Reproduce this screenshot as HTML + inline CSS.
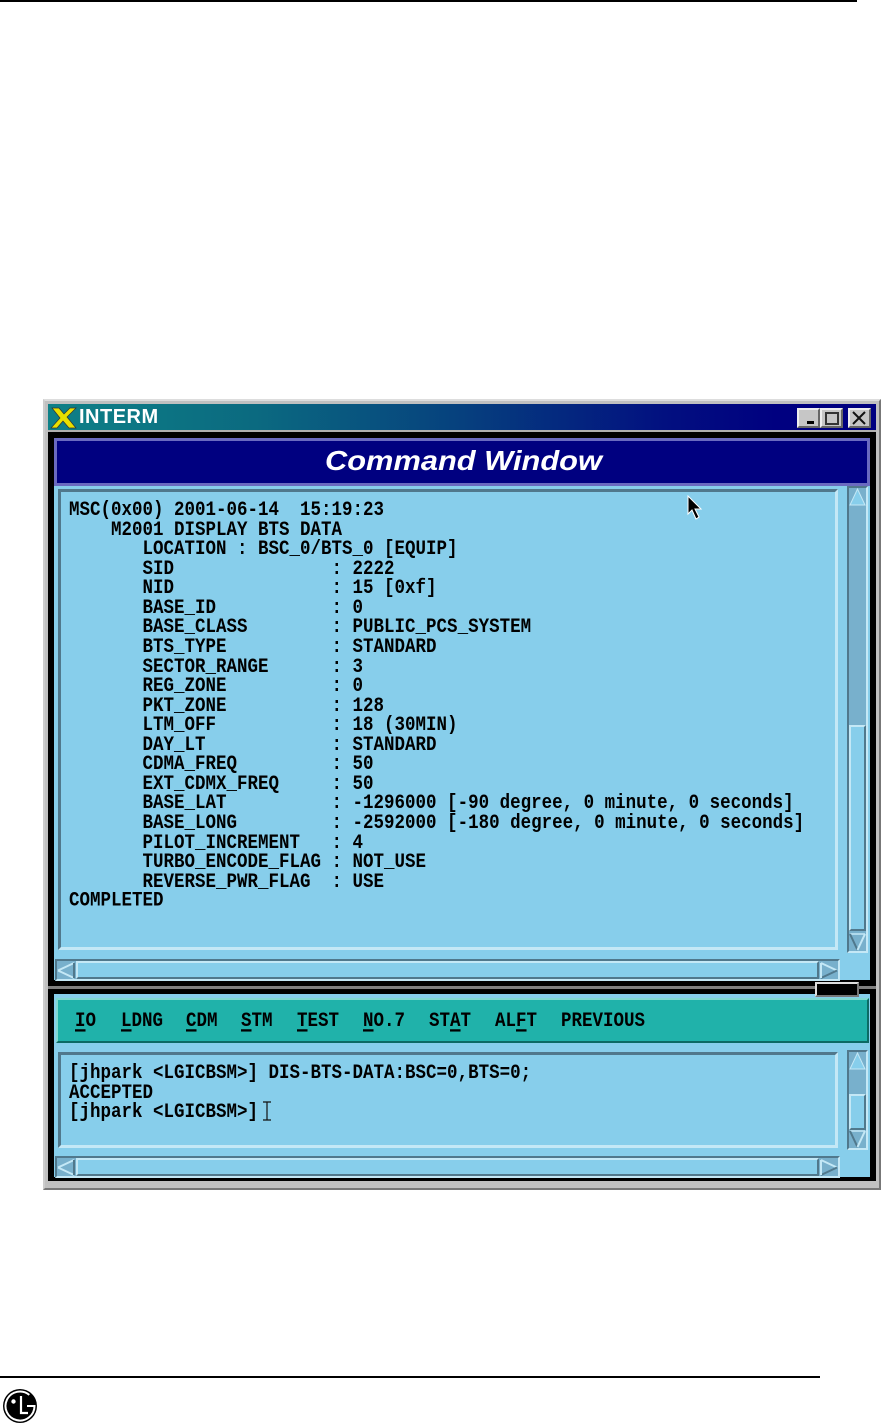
<!DOCTYPE html>
<html><head><meta charset="utf-8"><style>
html,body{margin:0;padding:0;background:#fff}
body{position:relative;width:881px;height:1425px;overflow:hidden}
.a{position:absolute;box-sizing:border-box}
.sunk{border:3px solid;border-color:#50788c #c4e8f6 #c4e8f6 #50788c;background:#87ceeb}
.raise{border:2px solid;border-color:#c4e8f6 #50788c #50788c #c4e8f6;background:#87ceeb}
.trough{background:#78b0cc;border:2px solid;border-color:#50788c #c4e8f6 #c4e8f6 #50788c}
pre{margin:0;position:absolute;font:bold 17.5px "Liberation Mono",monospace;color:#000;transform-origin:0 0;transform:scaleY(1.18);line-height:16.57px;white-space:pre}
.btn{position:absolute;top:408px;height:20px;width:23px;background:#c6c6c6;box-sizing:border-box;border:2px solid;border-color:#eee #666 #666 #eee}
u{text-underline-offset:3px;text-decoration-thickness:2px}
</style></head><body>
<div class="a" style="left:0;top:0;width:857px;height:2px;background:#000"></div>
<div class="a" style="left:0;top:1376px;width:820px;height:2px;background:#000"></div>
<svg class="a" style="left:2px;top:1388px" width="36" height="36" viewBox="0 0 36 36"><circle cx="18" cy="18" r="17" fill="#000"/><path d="M27.3 6.9A14.5 14.5 0 1 0 32.5 18H25" stroke="#fff" stroke-width="2" fill="none"/><circle cx="11.5" cy="13.5" r="2.2" fill="#fff"/><path d="M19 8V25H26" stroke="#fff" stroke-width="2.2" fill="none"/></svg>

<div class="a" style="left:43px;top:399px;width:838px;height:791px;background:#c0c0c0;border:2px solid;border-color:#ddd #777 #777 #ccc"></div>
<div class="a" style="left:48px;top:404px;width:828px;height:28px;background:linear-gradient(90deg,#0e8087 0%,#0b6a80 25%,#06407e 50%,#020f80 75%,#000080 88%);border-bottom:2px solid #b0b0b0"></div>
<svg class="a" style="left:50px;top:406px" width="28" height="24" viewBox="0 0 28 24"><path d="M2 2H9L14 8L20 2H26L17 11L26 22H19L13 15L7 22H1L10 12Z" fill="#e8e000" stroke="#333" stroke-width=".7"/></svg>
<div class="a" style="left:79px;top:404px;font:bold 20px/27px 'Liberation Sans',sans-serif;color:#fff;white-space:pre;letter-spacing:.5px">INTERM</div>
<div class="btn" style="left:797px"><div class="a" style="left:8px;top:11px;width:7px;height:3px;background:#000"></div></div>
<div class="btn" style="left:820px"><div class="a" style="left:3px;top:2px;width:14px;height:13px;border:2px solid #333"></div></div>
<div class="btn" style="left:848px"><svg class="a" style="left:2px;top:1px" width="15" height="14"><path d="M1 1L13 13M13 1L1 13" stroke="#111" stroke-width="2"/></svg></div>

<div class="a" style="left:48px;top:432px;width:828px;height:551px;background:#87ceeb;border:solid #000;border-width:6px 6px 3px 6px"></div>
<div class="a" style="left:48px;top:983px;width:828px;height:3px;background:#000"></div>
<div class="a" style="left:48px;top:986px;width:828px;height:3px;background:#808080"></div>
<div class="a" style="left:48px;top:989px;width:828px;height:192px;background:#87ceeb;border:solid #000;border-width:5px 6px 4px 6px"></div>
<div class="a" style="left:815px;top:982px;width:44px;height:15px;background:#000;border:2px solid;border-color:#ddd #777 #777 #ddd"></div>

<div class="a" style="left:54px;top:438px;width:816px;height:48px;background:#000080;border:3px solid #6a6ac0;outline:0"></div>
<div class="a" style="left:325px;top:444px;font:italic bold 28px/34px 'Liberation Sans',sans-serif;color:#fff;white-space:pre;transform-origin:0 0;transform:scaleX(1.1)">Command Window</div>

<div class="a sunk" style="left:58px;top:489px;width:780px;height:461px"></div>
<pre style="left:69px;top:501px">MSC(0x00) 2001-06-14  15:19:23
    M2001 DISPLAY BTS DATA
       LOCATION : BSC_0/BTS_0 [EQUIP]
       SID               : 2222
       NID               : 15 [0xf]
       BASE_ID           : 0
       BASE_CLASS        : PUBLIC_PCS_SYSTEM
       BTS_TYPE          : STANDARD
       SECTOR_RANGE      : 3
       REG_ZONE          : 0
       PKT_ZONE          : 128
       LTM_OFF           : 18 (30MIN)
       DAY_LT            : STANDARD
       CDMA_FREQ         : 50
       EXT_CDMX_FREQ     : 50
       BASE_LAT          : -1296000 [-90 degree, 0 minute, 0 seconds]
       BASE_LONG         : -2592000 [-180 degree, 0 minute, 0 seconds]
       PILOT_INCREMENT   : 4
       TURBO_ENCODE_FLAG : NOT_USE
       REVERSE_PWR_FLAG  : USE
COMPLETED</pre>

<!-- right scroll 1 -->
<div class="a trough" style="left:847px;top:486px;width:21px;height:467px"></div>
<div class="a raise" style="left:849px;top:725px;width:17px;height:206px"></div>
<svg class="a" style="left:849px;top:488px" width="17" height="18"><path d="M8.5 1L16 17H1Z" fill="#87ceeb" stroke="#c4e8f6"/></svg>
<svg class="a" style="left:849px;top:933px" width="17" height="18"><path d="M1 1H16" stroke="#c4e8f6" stroke-width="1.5"/><path d="M1 1L8.5 17" stroke="#50788c" stroke-width="2"/><path d="M16 1L8.5 17" stroke="#c4e8f6" stroke-width="2"/></svg>
<!-- hscroll 1 -->
<div class="a trough" style="left:55px;top:959px;width:785px;height:22px"></div>
<div class="a raise" style="left:76px;top:961px;width:743px;height:18px"></div>
<svg class="a" style="left:57px;top:962px" width="18" height="17"><path d="M1 8.5L17 1" stroke="#c4e8f6" stroke-width="2"/><path d="M1 8.5L17 16" stroke="#c4e8f6" stroke-width="2"/><path d="M17 1V16" stroke="#50788c" stroke-width="2"/></svg>
<svg class="a" style="left:820px;top:962px" width="18" height="17"><path d="M17 8.5L1 1" stroke="#c4e8f6" stroke-width="2"/><path d="M17 8.5L1 16" stroke="#50788c" stroke-width="2"/><path d="M1 1V16" stroke="#c4e8f6" stroke-width="2"/></svg>

<!-- menu -->
<div class="a" style="left:56px;top:998px;width:813px;height:45px;background:#20b2aa;border:2px solid;border-color:#80d8d0 #0c6a64 #0c6a64 #80d8d0"></div>
<pre style="left:75px;top:1012px;transform:scaleY(1.15)"><u>I</u>O</pre>
<pre style="left:121px;top:1012px;transform:scaleY(1.15)"><u>L</u>DNG</pre>
<pre style="left:186px;top:1012px;transform:scaleY(1.15)"><u>C</u>DM</pre>
<pre style="left:241px;top:1012px;transform:scaleY(1.15)"><u>S</u>TM</pre>
<pre style="left:297px;top:1012px;transform:scaleY(1.15)"><u>T</u>EST</pre>
<pre style="left:363px;top:1012px;transform:scaleY(1.15)"><u>N</u>O.7</pre>
<pre style="left:429px;top:1012px;transform:scaleY(1.15)">ST<u>A</u>T</pre>
<pre style="left:495px;top:1012px;transform:scaleY(1.15)">AL<u>F</u>T</pre>
<pre style="left:561px;top:1012px;transform:scaleY(1.15)">PREVIOUS</pre>

<div class="a sunk" style="left:58px;top:1052px;width:780px;height:96px"></div>
<pre style="left:69px;top:1064px">[jhpark &lt;LGICBSM&gt;] DIS-BTS-DATA:BSC=0,BTS=0;
ACCEPTED
[jhpark &lt;LGICBSM&gt;]</pre>
<svg class="a" style="left:262px;top:1101px" width="10" height="20"><path d="M1 1H9M5 1V19M1 19H9" stroke="#111" stroke-width="1.2" fill="none"/></svg>

<div class="a trough" style="left:847px;top:1050px;width:21px;height:100px"></div>
<div class="a raise" style="left:849px;top:1094px;width:17px;height:36px"></div>
<svg class="a" style="left:849px;top:1052px" width="17" height="18"><path d="M8.5 1L16 17H1Z" fill="#87ceeb" stroke="#c4e8f6"/></svg>
<svg class="a" style="left:849px;top:1130px" width="17" height="18"><path d="M1 1H16" stroke="#c4e8f6" stroke-width="1.5"/><path d="M1 1L8.5 17" stroke="#50788c" stroke-width="2"/><path d="M16 1L8.5 17" stroke="#c4e8f6" stroke-width="2"/></svg>

<div class="a trough" style="left:55px;top:1156px;width:785px;height:22px"></div>
<div class="a raise" style="left:76px;top:1158px;width:743px;height:18px"></div>
<svg class="a" style="left:57px;top:1159px" width="18" height="17"><path d="M1 8.5L17 1" stroke="#c4e8f6" stroke-width="2"/><path d="M1 8.5L17 16" stroke="#c4e8f6" stroke-width="2"/><path d="M17 1V16" stroke="#50788c" stroke-width="2"/></svg>
<svg class="a" style="left:820px;top:1159px" width="18" height="17"><path d="M17 8.5L1 1" stroke="#c4e8f6" stroke-width="2"/><path d="M17 8.5L1 16" stroke="#50788c" stroke-width="2"/><path d="M1 1V16" stroke="#c4e8f6" stroke-width="2"/></svg>

<svg class="a" style="left:686px;top:495px" width="18" height="26"><path d="M2 1V19L6 15L10 24L13 22L9 14L15 14Z" fill="#000" stroke="#fff" stroke-width="1"/></svg>
</body></html>
